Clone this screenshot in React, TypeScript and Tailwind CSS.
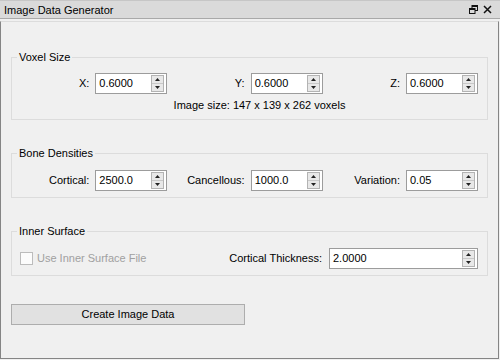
import type { ReactNode } from 'react';

const font = { fontFamily: '"Liberation Sans", Arial, sans-serif' };

function SpinArrows() {
  return (
    <div className="my-[1px] mr-[2px] flex w-[13px] flex-col border border-[#b3b3b3] bg-[#e8e8e8]">
      <div className="flex flex-1 items-center justify-center border-b border-[#c8c8c8]">
        <svg width="5" height="3" viewBox="0 0 5 3">
          <polygon points="0,3 5,3 2.5,0" fill="#222" />
        </svg>
      </div>
      <div className="flex flex-1 items-center justify-center">
        <svg width="5" height="3" viewBox="0 0 5 3">
          <polygon points="0,0 5,0 2.5,3" fill="#222" />
        </svg>
      </div>
    </div>
  );
}

function SpinBox({ value, width = 'w-[72px]' }: { value: string; width?: string }) {
  return (
    <div className={`flex h-[21px] ${width} border border-[#9c9c9c] bg-white`}>
      <div className="flex-1 pl-[3px] text-[11px] leading-[19px] text-black">{value}</div>
      <SpinArrows />
    </div>
  );
}

function Field({ label, value }: { label: string; value: string }) {
  return (
    <div className="flex flex-1 items-center justify-end gap-[6px]">
      <span className="text-[11px] text-black">{label}</span>
      <SpinBox value={value} />
    </div>
  );
}

function GroupBox({ title, children, className = '' }: { title: string; children: ReactNode; className?: string }) {
  return (
    <fieldset className={`border border-[#dcdcdc] ${className}`}>
      <legend className="ml-[5px] px-[2px] text-[11px] leading-[14px] text-black">{title}</legend>
      {children}
    </fieldset>
  );
}

export default function App() {
  return (
    <div className="h-[360px] w-[500px] bg-[#f0f0f0]" style={font}>
      <div className="flex h-[19px] items-center justify-between border-t border-b border-t-[#c6c6c6] border-b-[#a9a9a9] bg-[#dadada] pl-[4px] pr-[8px]">
        <span className="text-[11px] leading-[14px] text-black">Image Data Generator</span>
        <div className="flex items-center gap-[5px]">
          <svg width="9" height="9" viewBox="0 0 9 9">
            <rect x="3" y="0.5" width="5.5" height="5" fill="none" stroke="#111" />
            <rect x="3" y="0" width="6" height="2" fill="#111" />
            <rect x="0.5" y="3.5" width="5.5" height="5" fill="#dadada" stroke="#111" />
            <rect x="0" y="3" width="6" height="2" fill="#111" />
          </svg>
          <svg width="9" height="9" viewBox="0 0 9 9">
            <path d="M1 1 L8 8 M8 1 L1 8" stroke="#111" strokeWidth="1.5" />
          </svg>
        </div>
      </div>
      <div className="mt-[2px] h-[338px] w-[499px] border-x border-b border-t border-x-[#858585] border-b-[#858585] border-t-[#dcdcdc] px-[10px] pt-[28px]">
        <GroupBox title="Voxel Size">
          <div className="pr-[9px] pt-[9px] pb-[7px]">
            <div className="flex">
              <Field label="X:" value="0.6000" />
              <Field label="Y:" value="0.6000" />
              <Field label="Z:" value="0.6000" />
            </div>
            <div className="mt-[4px] pl-[29px] text-center text-[11px] leading-[14px] text-black">
              Image size: 147 x 139 x 262 voxels
            </div>
          </div>
        </GroupBox>

        <GroupBox title="Bone Densities" className="mt-[26px]">
          <div className="flex pr-[9px] pt-[10px] pb-[6px]">
            <Field label="Cortical:" value="2500.0" />
            <Field label="Cancellous:" value="1000.0" />
            <Field label="Variation:" value="0.05" />
          </div>
        </GroupBox>

        <GroupBox title="Inner Surface" className="mt-[26px]">
          <div className="flex items-center pr-[9px] pl-[8px] pt-[10px] pb-[6px]">
            <div className="h-[13px] w-[13px] border border-[#bcbcbc] bg-[#fcfcfc]" />
            <span className="ml-[4px] text-[11px] text-[#a0a0a0]">Use Inner Surface File</span>
            <div className="flex flex-1 items-center justify-end gap-[7px]">
              <span className="text-[11px] text-black">Cortical Thickness:</span>
              <SpinBox value="2.0000" width="w-[149px]" />
            </div>
          </div>
        </GroupBox>

        <button className="mt-[28px] h-[21px] w-[234px] border border-[#adadad] bg-[#e1e1e1] text-[11px] text-black">
          Create Image Data
        </button>
      </div>
    </div>
  );
}
